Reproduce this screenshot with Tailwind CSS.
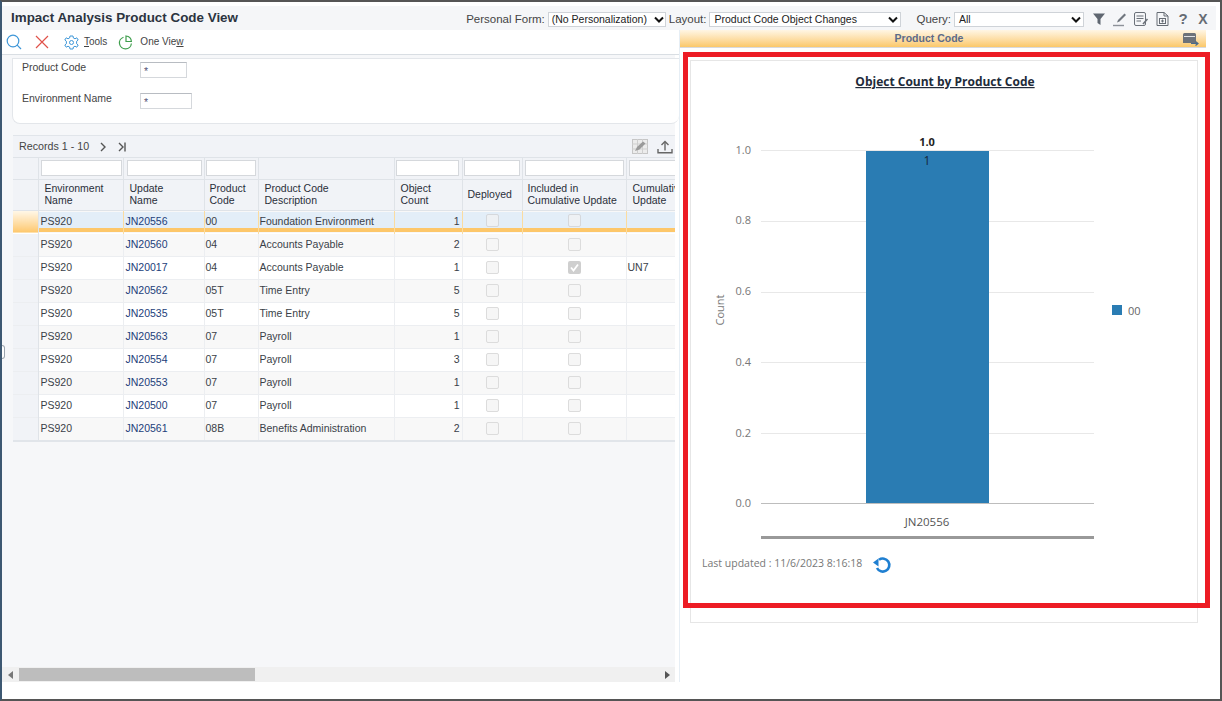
<!DOCTYPE html>
<html lang="en">
<head>
<meta charset="utf-8">
<title>Impact Analysis Product Code View</title>
<script src="https://cdn.jsdelivr.net/npm/@tailwindcss/browser@4"></script>
</head>
<body class="bg-white">
<div class="relative w-[1222px] h-[701px] overflow-hidden bg-white border-t-2 border-b-2 border-r-2 border-l-2 border-t-[#555555] border-b-[#555555] border-r-[#555555] border-l-[#3d5872] font-['Liberation_Sans',sans-serif] text-[#333333]">

  <!-- title bar -->
  <div class="mt-[4px] mr-[4px] h-[24px] bg-[#f5f6f8] flex items-center">
    <h1 class="ml-[9px] text-[13.4px] font-bold text-[#2c3440] whitespace-nowrap">Impact Analysis Product Code View</h1>
    <div class="ml-auto mt-[3px] flex items-center text-[11.5px] text-[#444444]">
      <span>Personal Form:</span>
      <div class="ml-[3px] w-[118px] h-[15px] bg-white border border-[#cfd3d8] flex items-center justify-between pl-[3px] pr-[1px] text-[10.5px] text-[#222222]">
        <span class="whitespace-nowrap">(No Personalization)</span>
        <svg width="10" height="7" viewBox="0 0 10 7"><path d="M1 1.5 5 5.5 9 1.5" fill="none" stroke="#111" stroke-width="2"/></svg>
      </div>
      <span class="ml-[3px]">Layout:</span>
      <div class="ml-[3px] w-[192px] h-[15px] bg-white border border-[#cfd3d8] flex items-center justify-between pl-[4px] pr-[2px] text-[10.5px] text-[#222222]">
        <span class="whitespace-nowrap">Product Code Object Changes</span>
        <svg width="10" height="7" viewBox="0 0 10 7"><path d="M1 1.5 5 5.5 9 1.5" fill="none" stroke="#111" stroke-width="2"/></svg>
      </div>
      <span class="ml-[15px]">Query:</span>
      <div class="ml-[3px] w-[130px] h-[15px] bg-white border border-[#cfd3d8] flex items-center justify-between pl-[4px] pr-[2px] text-[10.5px] text-[#222222]">
        <span>All</span>
        <svg width="10" height="7" viewBox="0 0 10 7"><path d="M1 1.5 5 5.5 9 1.5" fill="none" stroke="#111" stroke-width="2"/></svg>
      </div>
      <div class="ml-[8px] mr-[6px] -mt-[1px] flex items-center gap-[6px]">
        <svg width="14" height="14" viewBox="0 0 14 14"><path d="M1 1.5H13L8.5 7V13L5.5 11V7Z" fill="#5f6670"/></svg>
        <svg width="15" height="15" viewBox="0 0 15 15"><path d="M12.5 1.5 14 3 7.5 9.5 5 10.5 6 8Z" fill="#70767e"/><path d="M1 13.5H12" stroke="#8d9299" stroke-width="1.4"/></svg>
        <svg width="16" height="16" viewBox="0 0 16 16" fill="none" stroke="#6b7179"><rect x="1.5" y="1.5" width="11" height="13" rx="1.5"/><path d="M3.5 5H10.5M3.5 7.5H10.5M3.5 10H8"/><path d="M14.5 8 10 13" stroke-width="1.6"/></svg>
        <svg width="15" height="16" viewBox="0 0 15 16" fill="none" stroke="#666c74"><path d="M2 1.5H9L13 5V14.5H2Z"/><path d="M9 1.5V5H13"/><rect x="4.5" y="7.5" width="6" height="5"/><path d="M7.5 8.5V11.5M6 10H9"/></svg>
        <span class="w-[14px] text-center text-[15px] font-bold text-[#666c74]">?</span>
        <span class="w-[14px] text-center text-[14px] font-bold text-[#666c74]">X</span>
      </div>
    </div>
  </div>

  <div class="flex h-[669px]">
    <!-- left pane -->
    <div class="w-[678px] shrink-0 flex flex-col border-r border-[#e6eef5]">
      <!-- toolbar -->
      <div class="h-[25px] shrink-0 border-b border-[#d9dee3] flex items-center text-[10px] text-[#444444]">
        <svg class="ml-[4px]" width="16" height="16" viewBox="0 0 16 16" fill="none" stroke="#3f97d8" stroke-width="1.2"><circle cx="7" cy="7" r="5.8"/><path d="M11.2 11.2 15 15"/></svg>
        <svg class="ml-[13px]" width="14" height="14" viewBox="0 0 14 14" fill="none" stroke="#e0524a" stroke-width="1.2"><path d="M1 1 13 13M13 1 1 13"/></svg>
        <svg class="ml-[15px]" width="15" height="15" viewBox="0 0 15 15" fill="none" stroke="#3f97d8"><path d="M6 1H9L9.4 3 11 3.8 12.8 2.8 14.2 5 12.6 6.3V8.7L14.2 10 12.8 12.2 11 11.2 9.4 12 9 14H6L5.6 12 4 11.2 2.2 12.2 .8 10 2.4 8.7V6.3L.8 5 2.2 2.8 4 3.8 5.6 3Z"/><circle cx="7.5" cy="7.5" r="2"/></svg>
        <span class="ml-[5px] -mt-[2px]"><span class="underline">T</span>ools</span>
        <svg class="ml-[11px]" width="15" height="15" viewBox="0 0 15 15" fill="none" stroke-width="1.2"><path d="M5.5 2.2A6 6 0 1 0 13.4 8.5" stroke="#3f9e4d"/><path d="M8 1A6 6 0 0 1 13.4 6.5H8Z" stroke="#3f9e4d"/></svg>
        <span class="ml-[7px] -mt-[2px]">One Vie<span class="underline">w</span></span>
      </div>

      <div class="flex-1 min-h-0 flex flex-col">
        <div class="w-[673px] flex-1 min-h-0 bg-[#f6f7f9]">
          <!-- search form -->
          <div class="w-[667px] ml-[10px] mt-[3px] h-[66px] bg-white border border-[#e3e6ea] border-r-0 rounded-b-[8px] text-[10.5px] text-[#444444]">
            <div class="flex items-start h-[31px] pt-[3px]">
              <span class="ml-[9px] w-[118px] -mt-[2px]">Product Code</span>
              <div class="w-[47px] h-[16px] bg-white border border-[#d5d8dc] border-t-[#b8bcc2] pl-[3px] leading-[16px] text-[#555577]">*</div>
            </div>
            <div class="flex items-start pt-[3px]">
              <span class="ml-[9px] w-[118px] -mt-[2px]">Environment Name</span>
              <div class="w-[52px] h-[16px] bg-white border border-[#d5d8dc] border-t-[#b8bcc2] pl-[3px] leading-[16px] text-[#555577]">*</div>
            </div>
          </div>

          <!-- grid -->
          <div class="ml-[11px] mt-[11px] w-[662px] bg-[#f1f3f7] border-t border-b-2 border-[#e1e5ea] overflow-hidden">
            <div class="h-[22px] flex items-center border-b border-[#dfe3e8] text-[10.7px] text-[#444444] relative">
              <span class="ml-[6px]">Records 1 - 10</span>
              <svg class="ml-[10px]" width="8" height="10" viewBox="0 0 8 10" fill="none" stroke="#555" stroke-width="1.4"><path d="M2 1 6 5 2 9"/></svg>
              <svg class="ml-[10px]" width="11" height="10" viewBox="0 0 11 10" fill="none" stroke="#555" stroke-width="1.4"><path d="M2 1 6 5 2 9M8 .5V9.5"/></svg>
              <svg class="ml-auto" width="16" height="15" viewBox="0 0 16 15"><rect x=".5" y=".5" width="15" height="14" fill="#ececec" stroke="#c6c6c6"/><path d="M0 5H16M0 10H16M5.5 0V15M10.5 0V15" stroke="#cfcfcf"/><path d="M3 12 5 8 11 2.5 13.5 4.5 7.5 10.5Z" fill="#9a9a9a"/></svg>
              <svg class="ml-[9px] mr-[2px]" width="16" height="14" viewBox="0 0 16 14" fill="none" stroke="#666" stroke-width="1.4"><path d="M1 9V12.8H15V9"/><path d="M8 10.5V2"/><path d="M4.5 5 8 1.5 11.5 5"/></svg>
            </div>
            <table class="table-fixed border-collapse w-[742px] text-[10.5px]">
              <colgroup>
                <col class="w-[25px]"><col class="w-[85px]"><col class="w-[81px]"><col class="w-[54px]"><col class="w-[136px]"><col class="w-[68px]"><col class="w-[60px]"><col class="w-[104px]"><col class="w-[129px]">
              </colgroup>
              <thead>
                <tr class="h-[21px] border-b border-[#dfe3e8]">
                  <td class="border-r border-[#dfe3e8]"></td>
                  <td class="border-r border-[#dfe3e8] pl-[2px]"><input class="block w-[81px] h-[16px] bg-white border border-[#d5d8dc]" aria-label="Environment Name"></td>
                  <td class="border-r border-[#dfe3e8] pl-[3px]"><input class="block w-[75px] h-[16px] bg-white border border-[#d5d8dc]" aria-label="Update Name"></td>
                  <td class="border-r border-[#dfe3e8] pl-[1px]"><input class="block w-[50px] h-[16px] bg-white border border-[#d5d8dc]" aria-label="Product Code"></td>
                  <td class="border-r border-[#dfe3e8]"></td>
                  <td class="border-r border-[#dfe3e8] pl-[1px]"><input class="block w-[63px] h-[16px] bg-white border border-[#d5d8dc]" aria-label="Object Count"></td>
                  <td class="border-r border-[#dfe3e8] pl-[1px]"><input class="block w-[56px] h-[16px] bg-white border border-[#d5d8dc]" aria-label="Deployed"></td>
                  <td class="border-r border-[#dfe3e8] pl-[2px]"><input class="block w-[99px] h-[16px] bg-white border border-[#d5d8dc]" aria-label="Included in Cumulative Update"></td>
                  <td class="pl-[2px]"><input class="block w-[100px] h-[16px] bg-white border border-[#d5d8dc]" aria-label="Cumulative Update"></td>
                </tr>
                <tr class="h-[31px] border-b border-[#dfe3e8] text-left text-[#2a2f3a] leading-[11.5px]">
                  <th class="font-normal border-r border-[#dfe3e8]"></th>
                  <th class="font-normal border-r border-[#dfe3e8] pl-[6px]">Environment<br>Name</th>
                  <th class="font-normal border-r border-[#dfe3e8] pl-[6px]">Update<br>Name</th>
                  <th class="font-normal border-r border-[#dfe3e8] pl-[5px]">Product<br>Code</th>
                  <th class="font-normal border-r border-[#dfe3e8] pl-[6px]">Product Code<br>Description</th>
                  <th class="font-normal border-r border-[#dfe3e8] pl-[6px]">Object<br>Count</th>
                  <th class="font-normal border-r border-[#dfe3e8] pl-[5px]">Deployed</th>
                  <th class="font-normal border-r border-[#dfe3e8] pl-[5px]">Included in<br>Cumulative Update</th>
                  <th class="font-normal pl-[6px]">Cumulative<br>Update</th>
                </tr>
              </thead>
              <tbody class="text-[#3a3f48]">
                <tr class="h-[23px] border-b border-white bg-[linear-gradient(#f8f8f8_0_2px,#e3eef8_2px_18px,#fdc76a_18px_22px,#ffffff_22px)]">
                  <td class="bg-gradient-to-b from-[#fff8ea] to-[#fdc76a] border-r border-[#dfe3e8]"></td>
                  <td class="pl-[2px] border-r border-[#fbdca0]">PS920</td>
                  <td class="pl-[2px] border-r border-[#fbdca0] text-[#22407a]">JN20556</td>
                  <td class="pl-[1px] border-r border-[#fbdca0]">00</td>
                  <td class="pl-[1px] border-r border-[#fbdca0]">Foundation Environment</td>
                  <td class="pr-[2px] text-right border-r border-[#fbdca0]">1</td>
                  <td class="border-r border-[#fbdca0]"><span class="block mx-auto -mt-[2px] w-[13px] h-[13px] rounded-[2px] bg-[#eef1f4] border border-[#d5d8dc]"></span></td>
                  <td class="border-r border-[#fbdca0]"><span class="block mx-auto -mt-[2px] w-[13px] h-[13px] rounded-[2px] bg-[#eef1f4] border border-[#d5d8dc]"></span></td>
                  <td></td>
                </tr>
                <tr class="h-[23px] bg-[#f8f8f8] border-b border-[#eceef1]">
                  <td class="bg-[#f1f3f7] border-r border-[#dfe3e8]"></td>
                  <td class="pl-[2px] border-r border-[#eceef1]">PS920</td>
                  <td class="pl-[2px] border-r border-[#eceef1] text-[#22407a]">JN20560</td>
                  <td class="pl-[1px] border-r border-[#eceef1]">04</td>
                  <td class="pl-[1px] border-r border-[#eceef1]">Accounts Payable</td>
                  <td class="pr-[2px] text-right border-r border-[#eceef1]">2</td>
                  <td class="border-r border-[#eceef1]"><span class="block mx-auto w-[13px] h-[13px] rounded-[2px] bg-[#f6f6f6] border border-[#dcdcdc]"></span></td>
                  <td class="border-r border-[#eceef1]"><span class="block mx-auto w-[13px] h-[13px] rounded-[2px] bg-[#f6f6f6] border border-[#dcdcdc]"></span></td>
                  <td></td>
                </tr>
                <tr class="h-[23px] bg-white border-b border-[#eceef1]">
                  <td class="bg-[#f1f3f7] border-r border-[#dfe3e8]"></td>
                  <td class="pl-[2px] border-r border-[#eceef1]">PS920</td>
                  <td class="pl-[2px] border-r border-[#eceef1] text-[#22407a]">JN20017</td>
                  <td class="pl-[1px] border-r border-[#eceef1]">04</td>
                  <td class="pl-[1px] border-r border-[#eceef1]">Accounts Payable</td>
                  <td class="pr-[2px] text-right border-r border-[#eceef1]">1</td>
                  <td class="border-r border-[#eceef1]"><span class="block mx-auto w-[13px] h-[13px] rounded-[2px] bg-[#f6f6f6] border border-[#dcdcdc]"></span></td>
                  <td class="border-r border-[#eceef1]"><svg class="block mx-auto" width="13" height="13" viewBox="0 0 13 13"><rect width="13" height="13" rx="2" fill="#cfcfcf"/><path d="M3 6.5 5.5 9.5 10 3.5" fill="none" stroke="#fff" stroke-width="1.8"/></svg></td>
                  <td class="pl-[1px]">UN7</td>
                </tr>
                <tr class="h-[23px] bg-[#f8f8f8] border-b border-[#eceef1]">
                  <td class="bg-[#f1f3f7] border-r border-[#dfe3e8]"></td>
                  <td class="pl-[2px] border-r border-[#eceef1]">PS920</td>
                  <td class="pl-[2px] border-r border-[#eceef1] text-[#22407a]">JN20562</td>
                  <td class="pl-[1px] border-r border-[#eceef1]">05T</td>
                  <td class="pl-[1px] border-r border-[#eceef1]">Time Entry</td>
                  <td class="pr-[2px] text-right border-r border-[#eceef1]">5</td>
                  <td class="border-r border-[#eceef1]"><span class="block mx-auto w-[13px] h-[13px] rounded-[2px] bg-[#f6f6f6] border border-[#dcdcdc]"></span></td>
                  <td class="border-r border-[#eceef1]"><span class="block mx-auto w-[13px] h-[13px] rounded-[2px] bg-[#f6f6f6] border border-[#dcdcdc]"></span></td>
                  <td></td>
                </tr>
                <tr class="h-[23px] bg-white border-b border-[#eceef1]">
                  <td class="bg-[#f1f3f7] border-r border-[#dfe3e8]"></td>
                  <td class="pl-[2px] border-r border-[#eceef1]">PS920</td>
                  <td class="pl-[2px] border-r border-[#eceef1] text-[#22407a]">JN20535</td>
                  <td class="pl-[1px] border-r border-[#eceef1]">05T</td>
                  <td class="pl-[1px] border-r border-[#eceef1]">Time Entry</td>
                  <td class="pr-[2px] text-right border-r border-[#eceef1]">5</td>
                  <td class="border-r border-[#eceef1]"><span class="block mx-auto w-[13px] h-[13px] rounded-[2px] bg-[#f6f6f6] border border-[#dcdcdc]"></span></td>
                  <td class="border-r border-[#eceef1]"><span class="block mx-auto w-[13px] h-[13px] rounded-[2px] bg-[#f6f6f6] border border-[#dcdcdc]"></span></td>
                  <td></td>
                </tr>
                <tr class="h-[23px] bg-[#f8f8f8] border-b border-[#eceef1]">
                  <td class="bg-[#f1f3f7] border-r border-[#dfe3e8]"></td>
                  <td class="pl-[2px] border-r border-[#eceef1]">PS920</td>
                  <td class="pl-[2px] border-r border-[#eceef1] text-[#22407a]">JN20563</td>
                  <td class="pl-[1px] border-r border-[#eceef1]">07</td>
                  <td class="pl-[1px] border-r border-[#eceef1]">Payroll</td>
                  <td class="pr-[2px] text-right border-r border-[#eceef1]">1</td>
                  <td class="border-r border-[#eceef1]"><span class="block mx-auto w-[13px] h-[13px] rounded-[2px] bg-[#f6f6f6] border border-[#dcdcdc]"></span></td>
                  <td class="border-r border-[#eceef1]"><span class="block mx-auto w-[13px] h-[13px] rounded-[2px] bg-[#f6f6f6] border border-[#dcdcdc]"></span></td>
                  <td></td>
                </tr>
                <tr class="h-[23px] bg-white border-b border-[#eceef1]">
                  <td class="bg-[#f1f3f7] border-r border-[#dfe3e8]"></td>
                  <td class="pl-[2px] border-r border-[#eceef1]">PS920</td>
                  <td class="pl-[2px] border-r border-[#eceef1] text-[#22407a]">JN20554</td>
                  <td class="pl-[1px] border-r border-[#eceef1]">07</td>
                  <td class="pl-[1px] border-r border-[#eceef1]">Payroll</td>
                  <td class="pr-[2px] text-right border-r border-[#eceef1]">3</td>
                  <td class="border-r border-[#eceef1]"><span class="block mx-auto w-[13px] h-[13px] rounded-[2px] bg-[#f6f6f6] border border-[#dcdcdc]"></span></td>
                  <td class="border-r border-[#eceef1]"><span class="block mx-auto w-[13px] h-[13px] rounded-[2px] bg-[#f6f6f6] border border-[#dcdcdc]"></span></td>
                  <td></td>
                </tr>
                <tr class="h-[23px] bg-[#f8f8f8] border-b border-[#eceef1]">
                  <td class="bg-[#f1f3f7] border-r border-[#dfe3e8]"></td>
                  <td class="pl-[2px] border-r border-[#eceef1]">PS920</td>
                  <td class="pl-[2px] border-r border-[#eceef1] text-[#22407a]">JN20553</td>
                  <td class="pl-[1px] border-r border-[#eceef1]">07</td>
                  <td class="pl-[1px] border-r border-[#eceef1]">Payroll</td>
                  <td class="pr-[2px] text-right border-r border-[#eceef1]">1</td>
                  <td class="border-r border-[#eceef1]"><span class="block mx-auto w-[13px] h-[13px] rounded-[2px] bg-[#f6f6f6] border border-[#dcdcdc]"></span></td>
                  <td class="border-r border-[#eceef1]"><span class="block mx-auto w-[13px] h-[13px] rounded-[2px] bg-[#f6f6f6] border border-[#dcdcdc]"></span></td>
                  <td></td>
                </tr>
                <tr class="h-[23px] bg-white border-b border-[#eceef1]">
                  <td class="bg-[#f1f3f7] border-r border-[#dfe3e8]"></td>
                  <td class="pl-[2px] border-r border-[#eceef1]">PS920</td>
                  <td class="pl-[2px] border-r border-[#eceef1] text-[#22407a]">JN20500</td>
                  <td class="pl-[1px] border-r border-[#eceef1]">07</td>
                  <td class="pl-[1px] border-r border-[#eceef1]">Payroll</td>
                  <td class="pr-[2px] text-right border-r border-[#eceef1]">1</td>
                  <td class="border-r border-[#eceef1]"><span class="block mx-auto w-[13px] h-[13px] rounded-[2px] bg-[#f6f6f6] border border-[#dcdcdc]"></span></td>
                  <td class="border-r border-[#eceef1]"><span class="block mx-auto w-[13px] h-[13px] rounded-[2px] bg-[#f6f6f6] border border-[#dcdcdc]"></span></td>
                  <td></td>
                </tr>
                <tr class="h-[23px] bg-[#f8f8f8]">
                  <td class="bg-[#f1f3f7] border-r border-[#dfe3e8]"></td>
                  <td class="pl-[2px] border-r border-[#eceef1]">PS920</td>
                  <td class="pl-[2px] border-r border-[#eceef1] text-[#22407a]">JN20561</td>
                  <td class="pl-[1px] border-r border-[#eceef1]">08B</td>
                  <td class="pl-[1px] border-r border-[#eceef1]">Benefits Administration</td>
                  <td class="pr-[2px] text-right border-r border-[#eceef1]">2</td>
                  <td class="border-r border-[#eceef1]"><span class="block mx-auto w-[13px] h-[13px] rounded-[2px] bg-[#f6f6f6] border border-[#dcdcdc]"></span></td>
                  <td class="border-r border-[#eceef1]"><span class="block mx-auto w-[13px] h-[13px] rounded-[2px] bg-[#f6f6f6] border border-[#dcdcdc]"></span></td>
                  <td></td>
                </tr>
              </tbody>
            </table>
          </div>
        </div>
        <!-- horizontal scrollbar -->
        <div class="w-[673px] h-[15px] shrink-0 bg-[#f0f0f0] flex items-center">
          <svg class="ml-[6px]" width="5" height="8" viewBox="0 0 5 8"><path d="M5 0V8L0 4Z" fill="#777"/></svg>
          <div class="ml-[6px] w-[236px] h-[13px] bg-[#bdbdbd]"></div>
          <svg class="ml-auto mr-[5px]" width="5" height="8" viewBox="0 0 5 8"><path d="M0 0V8L5 4Z" fill="#555"/></svg>
        </div>
        <div class="w-[678px] h-[17px] shrink-0 bg-white"></div>
      </div>
    </div>

    <!-- right pane -->
    <div class="flex-1 min-w-0">
      <div class="mr-[14px] pr-[28px] h-[18px] bg-gradient-to-b from-[#fff6e4] to-[#fbc868] border-b border-[#d8dade] flex items-center relative">
        <span class="mx-auto text-[10.5px] font-bold text-[#5d6b88]">Product Code</span>
        <svg class="absolute right-[7px] top-[3px]" width="16" height="14" viewBox="0 0 16 14"><path d="M0 1.5A1.5 1.5 0 0 1 1.5 0H11.5A1.5 1.5 0 0 1 13 1.5V10H0Z" fill="#6d7279"/><path d="M1 3.5H12" stroke="#fff" stroke-width=".8"/><path d="M8 10.5H14.5M12.5 8.5 15 10.5 12.5 12.5" fill="none" stroke="#4a6a8a" stroke-width="1.2"/></svg>
      </div>
      <div class="ml-[10px] mt-[12px] w-[508px] h-[563px] border border-[#e6e6e6] bg-white">
        <svg class="block" width="506" height="561" viewBox="691 61 506 561" font-family="'Open Sans','Noto Sans',sans-serif">
          <text x="945" y="86" text-anchor="middle" font-size="12" font-weight="700" fill="#222b3a" text-decoration="underline">Object Count by Product Code</text>
          <g stroke="#e8e8e8" stroke-width="1">
            <path d="M761 150.500H1094"/><path d="M761 221.500H1094"/><path d="M761 292.500H1094"/><path d="M761 362.500H1094"/><path d="M761 433.500H1094"/>
          </g>
          <path d="M761 503.500H1094" stroke="#bdbdbd"/>
          <rect x="866" y="151" width="123" height="352" fill="#2a7cb3"/>
          <g font-size="11" fill="#777777" text-anchor="end">
            <text x="751" y="154">1.0</text>
            <text x="751" y="224">0.8</text>
            <text x="751" y="295">0.6</text>
            <text x="751" y="366">0.4</text>
            <text x="751" y="437">0.2</text>
            <text x="751" y="507">0.0</text>
          </g>
          <text transform="translate(724 310) rotate(-90)" text-anchor="middle" font-size="11" fill="#777777">Count</text>
          <text x="927" y="146" text-anchor="middle" font-size="11" font-weight="700" fill="#222222">1.0</text>
          <text x="927" y="165" text-anchor="middle" font-size="12" fill="#16283a">1</text>
          <text x="927" y="526" text-anchor="middle" font-size="11.500" fill="#555555">JN20556</text>
          <rect x="761" y="536" width="333" height="3" fill="#999999"/>
          <rect x="1112" y="305" width="10" height="10" fill="#2a7cb3"/>
          <text x="1128" y="315" font-size="11" fill="#666666">00</text>
          <text x="702" y="567" font-size="10.500" fill="#777777">Last updated : 11/6/2023 8:16:18</text>
          <path d="M879 559.800A6.500 6.500 0 1 1 877 568" fill="none" stroke="#1f7fd1" stroke-width="2.600"/>
          <path d="M873 562.500 878.500 558.500V566.500Z" fill="#1f7fd1"/>
        </svg>
      </div>
    </div>
  </div>

  <!-- annotation box and splitter handle over the page -->
  <div class="absolute left-[681px] top-[50px] w-[527px] h-[556px] border-[5px] border-[#ed1c24] pointer-events-none"></div>
  <div class="absolute left-0 top-[343px] w-[3px] h-[14px] rounded-r-[3px] border border-l-0 border-[#9aa3ad] bg-white"></div>
</div>
</body>
</html>
